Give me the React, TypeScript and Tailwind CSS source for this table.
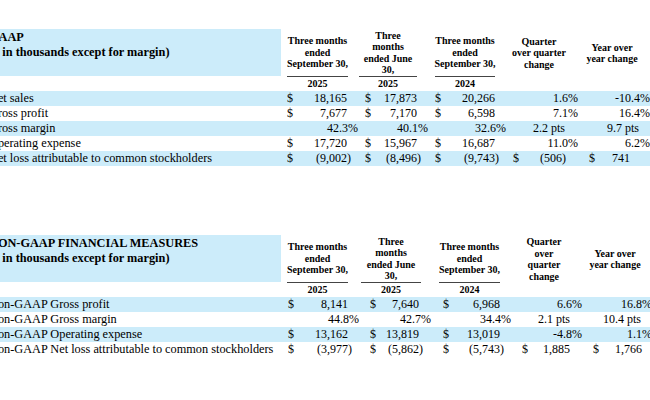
import clsx from "clsx";

type Col = {
	w: string;
	pl: string;
	amt: string;
	paren: string;
	pct: string;
	pts: string;
	box: string;
	head: string[];
	line?: boolean;
	year?: string;
};

type Table = {
	title: string[];
	cols: Col[];
	rows: { label: string; values: string[]; blue?: boolean }[];
};

const gaap: Table = {
	title: ["GAAP", "($ in thousands except for margin)"],
	cols: [
		{ w: "w-[78px]", pl: "pl-[6px]", amt: "pr-[12px]", paren: "pr-[8px]", pct: "pr-[1px]", pts: "pr-[12px]", box: "ml-[6px] w-[61px]", head: ["Three months", "ended", "September 30,"], line: true, year: "2025" },
		{ w: "w-[70px]", pl: "pl-[6px]", amt: "pr-[12px]", paren: "pr-[8px]", pct: "pr-[1px]", pts: "pr-[12px]", box: "ml-0 w-[58px]", head: ["Three", "months", "ended June", "30,"], line: true, year: "2025" },
		{ w: "w-[78px]", pl: "pl-[6px]", amt: "pr-[12px]", paren: "pr-[8px]", pct: "pr-[1px]", pts: "pr-[12px]", box: "ml-[6px] w-[60px]", head: ["Three months", "ended", "September 30,"], line: true, year: "2024" },
		{ w: "w-[74px]", pl: "pl-[6px]", amt: "pr-[19px]", paren: "pr-[15px]", pct: "pr-[3px]", pts: "pr-[16px]", box: "ml-0 w-[64px]", head: ["Quarter", "over quarter", "change"] },
		{ w: "w-[80px]", pl: "pl-[8px]", amt: "pr-[31px]", paren: "pr-[27px]", pct: "pr-[11px]", pts: "pr-[22px]", box: "ml-0 w-[62px]", head: ["Year over", "year change"] },
	],
	rows: [
		{ label: "Net sales", values: ["$18,165", "$17,873", "$20,266", "1.6%", "-10.4%"], blue: true },
		{ label: "Gross profit", values: ["$7,677", "$7,170", "$6,598", "7.1%", "16.4%"] },
		{ label: "Gross margin", values: ["42.3%", "40.1%", "32.6%", "2.2 pts", "9.7 pts"], blue: true },
		{ label: "Operating expense", values: ["$17,720", "$15,967", "$16,687", "11.0%", "6.2%"] },
		{ label: "Net loss attributable to common stockholders", values: ["$(9,002)", "$(8,496)", "$(9,743)", "$(506)", "$741"], blue: true },
	],
};

const nonGaap: Table = {
	title: ["NON-GAAP FINANCIAL MEASURES", "($ in thousands except for margin)"],
	cols: [
		{ w: "w-[79px]", pl: "pl-[7px]", amt: "pr-[12px]", paren: "pr-[8px]", pct: "pr-[1px]", pts: "pr-[12px]", box: "ml-[6px] w-[61px]", head: ["Three months", "ended", "September 30,"], line: true, year: "2025" },
		{ w: "w-[74px]", pl: "pl-[10px]", amt: "pr-[15px]", paren: "pr-[11px]", pct: "pr-[3px]", pts: "pr-[15px]", box: "ml-[1px] w-[60px]", head: ["Three", "months", "ended June", "30,"], line: true, year: "2025" },
		{ w: "w-[80px]", pl: "pl-[9px]", amt: "pr-[14px]", paren: "pr-[10px]", pct: "pr-[3px]", pts: "pr-[14px]", box: "ml-[5px] w-[61px]", head: ["Three months", "ended", "September 30,"], line: true, year: "2024" },
		{ w: "w-[76px]", pl: "pl-[8px]", amt: "pr-[20px]", paren: "pr-[16px]", pct: "pr-[8px]", pts: "pr-[20px]", box: "ml-0 w-[60px]", head: ["Quarter", "over", "quarter", "change"] },
		{ w: "w-[80px]", pl: "pl-[3px]", amt: "pr-[28px]", paren: "pr-[24px]", pct: "pr-[18px]", pts: "pr-[29px]", box: "-ml-[1px] w-[52px]", head: ["Year over", "year change"] },
	],
	rows: [
		{ label: "Non-GAAP Gross profit", values: ["$8,141", "$7,640", "$6,968", "6.6%", "16.8%"], blue: true },
		{ label: "Non-GAAP Gross margin", values: ["44.8%", "42.7%", "34.4%", "2.1 pts", "10.4 pts"] },
		{ label: "Non-GAAP Operating expense", values: ["$13,162", "$13,819", "$13,019", "-4.8%", "1.1%"], blue: true },
		{ label: "Non-GAAP Net loss attributable to common stockholders", values: ["$(3,977)", "$(5,862)", "$(5,743)", "$1,885", "$1,766"] },
	],
};

function padFor(c: Col, text: string) {
	if (text.endsWith("%")) return c.pct;
	if (text.endsWith(")")) return c.paren;
	if (text.includes("pts")) return c.pts;
	return c.amt;
}

function FinTable({ table }: { table: Table }) {
	return (
		<div>
			{/* header */}
			<div className="flex h-[48px]">
				<div className="h-[47px] w-[292px] shrink-0 bg-[#ccecfa] pt-[1px] text-[12.3px] font-bold leading-[15px] whitespace-nowrap">
					{table.title.map((t) => (
						<div key={t}>{t}</div>
					))}
				</div>
				{table.cols.map((c, i) => (
					<div key={i} className={clsx(c.w, "flex shrink-0")}>
						<div
							className={clsx(
								c.box,
								"flex h-full flex-col items-center justify-center whitespace-nowrap text-center text-[10px] font-bold leading-[11.5px]",
								c.line && "border-b-[1.5px] border-[#444]",
							)}
						>
							{c.head.map((h) => (
								<div key={h}>{h}</div>
							))}
						</div>
					</div>
				))}
			</div>
			{/* years */}
			<div className="flex h-[14px]">
				<div className="w-[292px] shrink-0" />
				{table.cols.map((c, i) => (
					<div key={i} className={clsx(c.w, "flex shrink-0")}>
						<div className={clsx(c.box, "text-center text-[10px] font-bold leading-[14px]")}>{c.year}</div>
					</div>
				))}
			</div>
			{/* data */}
			{table.rows.map((r) => (
				<div key={r.label} className={clsx("flex h-[15px] text-[12px] leading-[15px]", r.blue && "bg-[#ccecfa]")}>
					<div className="w-[292px] shrink-0 whitespace-nowrap text-[12.3px]">{r.label}</div>
					{table.cols.map((c, i) => {
						const v = r.values[i];
						const dollar = v.startsWith("$");
						const text = dollar ? v.slice(1) : v;
						return (
							<div key={i} className={clsx(c.w, c.pl, padFor(c, text), "flex shrink-0 justify-between whitespace-nowrap")}>
								<span>{dollar ? "$" : ""}</span>
								<span>{text}</span>
							</div>
						);
					})}
				</div>
			))}
		</div>
	);
}

export default function App() {
	return (
		<div className="h-[400px] w-[650px] overflow-hidden bg-white font-['Liberation_Serif',serif] text-black">
			<div className="-ml-[11px] pt-[29px]">
				<FinTable table={gaap} />
				<div className="mt-[69px]">
					<FinTable table={nonGaap} />
				</div>
			</div>
		</div>
	);
}
